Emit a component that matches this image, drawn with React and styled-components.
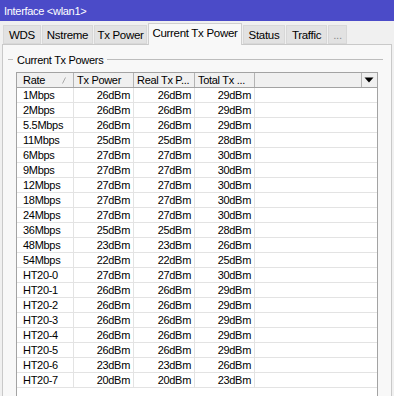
import React from "react";
import styled, { createGlobalStyle } from "styled-components";

const Global = createGlobalStyle`
  html, body { margin: 0; padding: 0; background: #f0f0f0; }
  * { box-sizing: border-box; }
`;

const Window = styled.div`
  width: 394px;
  height: 396px;
  overflow: hidden;
  display: flex;
  flex-direction: column;
  background: #f0f0f0;
  font-family: "Liberation Sans", Arial, sans-serif;
  font-size: 11px;
  letter-spacing: -0.3px;
  color: #000;
`;

const TitleBar = styled.div`
  height: 21px;
  flex: none;
  background: #4b4bc8;
  color: #fff;
  padding-left: 4px;
  display: flex;
  align-items: center;
  font-size: 11px;
`;

const TabBar = styled.div`
  height: 23px;
  flex: none;
  display: flex;
  align-items: flex-end;
  gap: 1px;
  padding-left: 3px;
  position: relative;
  z-index: 1;
`;

const Tab = styled.div`
  width: ${(p) => p.$w}px;
  height: ${(p) => (p.$active ? 22 : 19)}px;
  margin-bottom: ${(p) => (p.$active ? -1 : 0)}px;
  display: flex;
  align-items: ${(p) => (p.$active ? "flex-start" : "center")};
  padding-top: ${(p) => (p.$active ? 3 : 0)}px;
  justify-content: center;
  background: ${(p) => (p.$active ? "#f8f8f8" : "#e2e2e2")};
  border: 1px solid ${(p) => (p.$active ? "#cfcfcf" : "#d8d8d8")};
  border-bottom: ${(p) => (p.$active ? "none" : "1px solid #d8d8d8")};
  color: ${(p) => (p.$muted ? "#8a8a8a" : "#000")};
  font-size: 11.5px;
  white-space: nowrap;
`;

const Panel = styled.div`
  flex: 1;
  margin: 0 2px 0 2px;
  background: #f8f8f8;
  border: 1px solid #c9c9c9;
  border-bottom: none;
  padding: 8px 8px 0 0;
  display: flex;
  flex-direction: column;
  min-height: 0;
`;

const GroupHeader = styled.div`
  height: 13px;
  display: flex;
  align-items: center;
  gap: 4px;
  padding-left: 5px;
  flex: none;
`;

const GroupLine = styled.div`
  height: 1px;
  background: #bdbdbd;
  width: ${(p) => (p.$grow ? "auto" : "5px")};
  flex: ${(p) => (p.$grow ? 1 : "none")};
`;

const GroupTitle = styled.span`
  white-space: nowrap;
  font-size: 11px;
`;

const Table = styled.div`
  margin: 6px 0 0 13px;
  width: 362px;
  flex: 1;
  background: #fff;
  border: 1px solid #a3a3a3;
  border-bottom: none;
  overflow: hidden;
`;

const cols = "57px 60px 61px 60px 1fr 15px";

const HeaderRow = styled.div`
  display: grid;
  grid-template-columns: ${cols};
  height: 15px;
  background: #f0f0f0;
  border-bottom: 1px solid #a3a3a3;
`;

const HeaderCell = styled.div`
  position: relative;
  display: flex;
  align-items: center;
  padding-left: ${(p) => p.$pl || 3}px;
  border-right: ${(p) => (p.$last ? "none" : "1px solid #b4b4b4")};
  white-space: nowrap;
  overflow: hidden;
`;

const SortMark = styled.svg`
  position: absolute;
  right: 7px;
  top: 4px;
`;

const Row = styled.div`
  display: grid;
  grid-template-columns: ${cols};
  height: 15px;
  border-bottom: 1px solid #e3e3e3;
`;

const Cell = styled.div`
  display: flex;
  align-items: center;
  justify-content: ${(p) => (p.$right ? "flex-end" : "flex-start")};
  padding: ${(p) => (p.$right ? "0 3px 0 0" : "0 0 0 6px")};
  border-right: ${(p) => (p.$line ? "1px solid #e3e3e3" : "none")};
  white-space: nowrap;
`;

const Fill = styled.div`
  grid-column: span 2;
`;

const tabs = [
  { label: "WDS", w: 38 },
  { label: "Nstreme", w: 51 },
  { label: "Tx Power", w: 53 },
  { label: "Current Tx Power", w: 94, active: true },
  { label: "Status", w: 42 },
  { label: "Traffic", w: 41 },
  { label: "...", w: 19, muted: true },
];

const data = [
  ["1Mbps", 26, 26, 29],
  ["2Mbps", 26, 26, 29],
  ["5.5Mbps", 26, 26, 29],
  ["11Mbps", 25, 25, 28],
  ["6Mbps", 27, 27, 30],
  ["9Mbps", 27, 27, 30],
  ["12Mbps", 27, 27, 30],
  ["18Mbps", 27, 27, 30],
  ["24Mbps", 27, 27, 30],
  ["36Mbps", 25, 25, 28],
  ["48Mbps", 23, 23, 26],
  ["54Mbps", 22, 22, 25],
  ["HT20-0", 27, 27, 30],
  ["HT20-1", 26, 26, 29],
  ["HT20-2", 26, 26, 29],
  ["HT20-3", 26, 26, 29],
  ["HT20-4", 26, 26, 29],
  ["HT20-5", 26, 26, 29],
  ["HT20-6", 23, 23, 26],
  ["HT20-7", 20, 20, 23],
];

export default function App() {
  return (
    <>
      <Global />
      <Window>
        <TitleBar>Interface &lt;wlan1&gt;</TitleBar>
        <TabBar>
          {tabs.map((t) => (
            <Tab key={t.label} $w={t.w} $active={t.active} $muted={t.muted}>
              {t.label}
            </Tab>
          ))}
        </TabBar>
        <Panel>
          <GroupHeader>
            <GroupLine />
            <GroupTitle>Current Tx Powers</GroupTitle>
            <GroupLine $grow />
          </GroupHeader>
          <Table>
            <HeaderRow>
              <HeaderCell $pl={6}>
                Rate
                <SortMark width="4" height="7" viewBox="0 0 4 7">
                  <line x1="0.5" y1="6.5" x2="3.5" y2="0.5" stroke="#a8a8a8" strokeWidth="1" />
                </SortMark>
              </HeaderCell>
              <HeaderCell>Tx Power</HeaderCell>
              <HeaderCell>Real Tx P...</HeaderCell>
              <HeaderCell>Total Tx ...</HeaderCell>
              <HeaderCell />
              <HeaderCell $last $pl={2}>
                <svg width="10" height="6" viewBox="0 0 10 6">
                  <path d="M0.5 0.5 H9.5 L5 5.5 Z" fill="#000" />
                </svg>
              </HeaderCell>
            </HeaderRow>
            {data.map(([rate, tx, real, total]) => (
              <Row key={rate}>
                <Cell $line>{rate}</Cell>
                <Cell $line $right>{tx}dBm</Cell>
                <Cell $line $right>{real}dBm</Cell>
                <Cell $line $right>{total}dBm</Cell>
                <Fill />
              </Row>
            ))}
          </Table>
        </Panel>
      </Window>
    </>
  );
}
